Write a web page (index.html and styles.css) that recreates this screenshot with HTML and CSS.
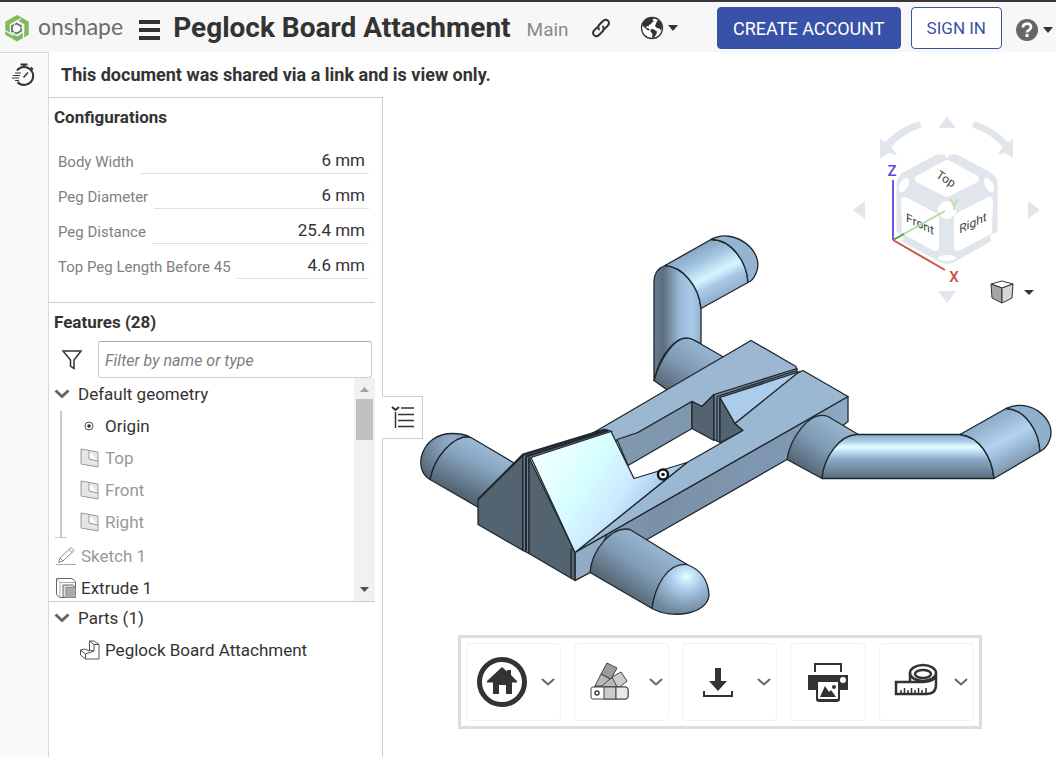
FILE: index.html
```html
<!DOCTYPE html>
<html lang="en">
<head>
    <meta charset="UTF-8">
    <meta name="viewport" content="width=device-width, initial-scale=1.0">
    <title>Peglock Board Attachment</title>
    <link rel="stylesheet" href="styles.css">
</head>
<body>
    <!-- Top bar -->
    <header class="topbar">
        <a class="logo" href="#" aria-label="Onshape home">
            <svg width="26" height="28" viewBox="0 0 26 28" fill="none">
                <path d="M13 3.500 22.500 9V19.500L13 25 3.500 19.500V9z" stroke="#7dbb5b" stroke-width="4.500"/>
                <path d="M6 11 17 4.500M19.500 12.500V24M9.500 21.500 1 16.500" stroke="#f7f7f7" stroke-width="1.300"/>
                <path d="M12.500 9.500 17 12V17L12.500 19.500 8 17V12z" stroke="#6b6b6b" stroke-width="1.800"/>
                <path d="M11 9l-1 3M18 13.500l-3 1M10 19l1-2.500" stroke="#f7f7f7"/>
            </svg>
            <span>onshape</span>
        </a>
        <button class="icon-btn menu-btn" aria-label="Menu">
            <svg width="21" height="20" viewBox="0 0 21 20" fill="#333"><path d="M0 0h21v4H0zM0 8h21v4H0zM0 16h21v4H0z"/></svg>
        </button>
        <h1>Peglock Board Attachment</h1>
        <span class="branch">Main</span>
        <button class="icon-btn link-btn" aria-label="Copy link">
            <svg width="20" height="20" viewBox="0 0 20 20" fill="none" stroke="#333" stroke-width="2" stroke-linecap="round">
                <path d="M8 11.500C6.500 9.500 7 8 8.500 6.500L12 3C14.500.500 18 2 18 5c0 1-.500 2-1.500 3L14 10.500"/>
                <path d="M12 8.500c1.500 2 1 3.500-.500 5L8 17c-2.500 2.500-6 1-6-2 0-1 .500-2 1.500-3L6 9.500"/>
            </svg>
        </button>
        <button class="icon-btn globe-btn" aria-label="Public document">
            <svg width="24" height="24" viewBox="0 0 24 24">
                <circle cx="12" cy="12" r="10.500" fill="#fff" stroke="#333" stroke-width="1.300"/>
                <path d="M3 7 6.500 3 10 1.500 14 2 12.500 4 14 5.500 12.500 6 11 8 9 9 8.500 10.500 7 10l-1 1.500 2.500 1L10 14l-2 .500L5 12 2.500 9.500z" fill="#333"/>
                <path d="M17 5l2-1 2.500 4 .500 4-1.500 2.500-1-2L17 12l-2-2 1-2.500zM10.500 13.500 13 13l4 2.500-.500 2.500-3 4-1.500-.500.500-3.500-2-2.500z" fill="#333"/>
            </svg>
            <svg class="caret" width="10" height="6" viewBox="0 0 10 6"><path d="M0 0h10L5 6z" fill="#333"/></svg>
        </button>
        <div class="account">
            <button class="create-btn">CREATE ACCOUNT</button>
            <button class="signin-btn">SIGN IN</button>
            <button class="icon-btn help-btn" aria-label="Help">
                <svg width="22" height="22" viewBox="0 0 22 22">
                    <circle cx="11" cy="11" r="11" fill="#666"/>
                    <path d="M7 8.500C7 3.500 15 3.500 15 8c0 3-4 3-4 5.500" fill="none" stroke="#fff" stroke-width="2.800"/>
                    <path d="M9.500 15h3v3h-3z" fill="#fff"/>
                </svg>
                <svg class="caret" width="10" height="6" viewBox="0 0 10 6"><path d="M0 0h10L5 6z" fill="#333"/></svg>
            </button>
        </div>
    </header>

    <div class="content">
        <!-- Left rail -->
        <nav class="rail">
            <button class="icon-btn" aria-label="Performance">
                <svg width="24" height="24" viewBox="0 0 24 24" fill="none" stroke="#333">
                    <path d="M6 7.500A9 9 0 1 1 6.500 19" stroke-width="2"/>
                    <path d="M9.500 1.500h7M13 1.500v3M19.500 4.500l2.500 2" stroke-width="2"/>
                    <path d="M12.500 14.500 17 9.500" stroke-width="1.500"/>
                    <path d="M4 10h6M2 12.500h7M1 15h7M4 17.500h4"/>
                </svg>
            </button>
        </nav>

        <main class="main">
            <p class="notice">This document was shared via a link and is view only.</p>

            <div class="workspace">
                <aside class="panel">
                    <!-- Configurations -->
                    <section class="config">
                        <h2>Configurations</h2>
                        <div class="field"><label for="bodyWidth">Body Width</label><input id="bodyWidth" value="6 mm" readonly></div>
                        <div class="field"><label for="pegDiameter">Peg Diameter</label><input id="pegDiameter" value="6 mm" readonly></div>
                        <div class="field"><label for="pegDistance">Peg Distance</label><input id="pegDistance" value="25.4 mm" readonly></div>
                        <div class="field"><label for="pegLength">Top Peg Length Before 45</label><input id="pegLength" value="4.6 mm" readonly></div>
                    </section>

                    <!-- Feature list -->
                    <section class="features">
                        <h2>Features (28)</h2>
                        <div class="filter">
                            <svg width="20" height="20" viewBox="0 0 20 20" fill="none" stroke="#333" stroke-width="1.500"><path d="M1 1h18l-7 9v8.500L8.500 16v-6z"/></svg>
                            <input type="text" placeholder="Filter by name or type" aria-label="Filter by name or type">
                        </div>
                        <div class="feature-scroll">
                            <ul class="tree">
                                <li>
                                    <div class="row"><svg class="chevron" width="16" height="10" viewBox="0 0 16 10"><path d="M1.500 1.500 8 7.500l6.500-6"/></svg>Default geometry</div>
                                    <ul class="children">
                                        <li class="row"><svg width="20" height="20" viewBox="0 0 20 20"><circle cx="9" cy="10" r="4" fill="none" stroke="#555"/><circle cx="9" cy="10" r="1.800" fill="#333"/></svg>Origin</li>
                                        <li class="row hidden-item"><svg width="20" height="20" viewBox="0 0 20 20"><path d="M1 1l17 3v15L1 16zM9 2.500V11l9 2" fill="#e6e6e6" stroke="#9a9a9a"/></svg>Top</li>
                                        <li class="row hidden-item"><svg width="20" height="20" viewBox="0 0 20 20"><path d="M1 1l17 3v15L1 16zM9 2.500V11l9 2" fill="#e6e6e6" stroke="#9a9a9a"/></svg>Front</li>
                                        <li class="row hidden-item"><svg width="20" height="20" viewBox="0 0 20 20"><path d="M1 1l17 3v15L1 16zM9 2.500V11l9 2" fill="#e6e6e6" stroke="#9a9a9a"/></svg>Right</li>
                                    </ul>
                                </li>
                                <li class="row feature hidden-item">
                                    <svg width="20" height="20" viewBox="0 0 20 20" fill="none"><path d="M2.500 16.500 4 12 15 1.500l3 3L7 15zM4 12l3 3M13 3.500l3 3" stroke="#8a8a8a"/><path d="M0 18.500h20" stroke="#9aa6d6"/></svg>Sketch 1
                                </li>
                                <li class="row feature">
                                    <svg width="20" height="20" viewBox="0 0 20 20" stroke="#666"><path d="M.500.500H16l3.500 3v16H4l-3.500-3z" fill="#fff"/><path d="M4 19.500v-15L.500.500M4 4.500h15.500" fill="none" stroke="#aaa"/><path d="M7 19.500V7h9.500l3 2v10.500z" fill="#ddd"/><path d="M10 9.500h9.500v10H10z" fill="#aaa" stroke="#888"/></svg>Extrude 1
                                </li>
                            </ul>
                            <div class="scrollbar">
                                <svg width="9" height="5" viewBox="0 0 9 5"><path d="M0 5h9L4.500 0z" fill="#a3a3a3"/></svg>
                                <div class="thumb"></div>
                                <svg class="down" width="9" height="5" viewBox="0 0 9 5"><path d="M0 0h9L4.500 5z" fill="#505050"/></svg>
                            </div>
                        </div>
                    </section>

                    <!-- Parts list -->
                    <section class="parts">
                        <div class="row"><svg class="chevron" width="16" height="10" viewBox="0 0 16 10"><path d="M1.500 1.500 8 7.500l6.500-6"/></svg>Parts (1)</div>
                        <div class="row part"><svg width="20" height="20" viewBox="0 0 20 20" fill="#fff" stroke="#555"><path d="M9.500 1H14l5 3.500V19H5.500L.500 15v-5l4-1 5 2z"/><path d="M9.500 1v9M9.500 1l4.500 3.500h5M14 4.500V11l-8.500 3v5M.500 10l5 4M9.500 10l4.500 1" fill="none"/></svg>Peglock Board Attachment</div>
                    </section>

                    <button class="panel-toggle" aria-label="Toggle feature list">
                        <svg width="24" height="24" viewBox="0 0 24 24" fill="none" stroke="#333"><path d="M1 2l3.500 3L8 2" stroke-width="2"/><path d="M4.500 7v16M10 3h13M7 9.500h16M7 15.500h16M7 21.500h16" stroke-width="1.500"/></svg>
                    </button>
                </aside>

                <!-- 3D view -->
                <div class="canvas">
                    <svg class="model" viewBox="383 98 673 659" stroke-linejoin="round" role="img" aria-label="Peglock Board Attachment model">
                        <defs>
                            <linearGradient id="pegSlope" gradientUnits="userSpaceOnUse" x1="482" y1="440" x2="456" y2="494"><stop offset="0" stop-color="#a1bedb"/><stop offset=".4" stop-color="#86a4bf"/><stop offset="1" stop-color="#52626f"/></linearGradient>
                            <linearGradient id="pegFront" gradientUnits="userSpaceOnUse" x1="660" y1="545" x2="624" y2="596"><stop offset="0" stop-color="#9bb8d4"/><stop offset=".5" stop-color="#7f9bb5"/><stop offset="1" stop-color="#53636f"/></linearGradient>
                            <linearGradient id="pegRight" gradientUnits="userSpaceOnUse" x1="842" y1="420" x2="803" y2="475"><stop offset="0" stop-color="#9bbad7"/><stop offset=".5" stop-color="#7e9ab4"/><stop offset="1" stop-color="#4e5e6c"/></linearGradient>
                            <linearGradient id="pegBase" gradientUnits="userSpaceOnUse" x1="700" y1="340" x2="664" y2="392"><stop offset="0" stop-color="#9bb8d4"/><stop offset=".5" stop-color="#7e99b2"/><stop offset="1" stop-color="#53636f"/></linearGradient>
                            <linearGradient id="pipeUp"><stop offset="0" stop-color="#657b90"/><stop offset=".2" stop-color="#5c6e7e"/><stop offset=".55" stop-color="#9bbad8"/><stop offset=".8" stop-color="#a9cbe9"/><stop offset="1" stop-color="#94b3d0"/></linearGradient>
                            <linearGradient id="pipeTop" gradientUnits="userSpaceOnUse" x1="686" y1="250" x2="713" y2="303"><stop offset="0" stop-color="#81a0bc"/><stop offset=".3" stop-color="#a3c5e3"/><stop offset=".58" stop-color="#d7f5ff"/><stop offset=".75" stop-color="#a7c9e7"/><stop offset="1" stop-color="#91aeca"/></linearGradient>
                            <linearGradient id="pipeFlat" x2="0" y2="1"><stop offset="0" stop-color="#8caac6"/><stop offset=".15" stop-color="#a8ccea"/><stop offset=".28" stop-color="#e4ffff"/><stop offset=".4" stop-color="#bddcf4"/><stop offset=".56" stop-color="#8cabc7"/><stop offset="1" stop-color="#596c7e"/></linearGradient>
                            <linearGradient id="pipeEnd" gradientUnits="userSpaceOnUse" x1="984" y1="420" x2="1010" y2="470"><stop offset="0" stop-color="#8daac5"/><stop offset=".5" stop-color="#b2d3f0"/><stop offset="1" stop-color="#7c97b0"/></linearGradient>
                            <linearGradient id="plate" gradientUnits="userSpaceOnUse" x1="540" y1="440" x2="645" y2="510"><stop offset="0" stop-color="#f4ffff"/><stop offset=".45" stop-color="#d8ffff"/><stop offset=".8" stop-color="#c9e8ff"/><stop offset="1" stop-color="#a9cbec"/></linearGradient>
                            <linearGradient id="sideFace"><stop offset="0" stop-color="#87a0b9"/><stop offset=".3" stop-color="#7b90a8"/><stop offset=".8" stop-color="#8099b3"/><stop offset="1" stop-color="#91aac5"/></linearGradient>
                            <radialGradient id="domeFront" cx=".6" cy=".25" r=".75"><stop offset="0" stop-color="#e3ffff"/><stop offset=".3" stop-color="#b2d4f0"/><stop offset=".6" stop-color="#91afca"/><stop offset="1" stop-color="#6d8598"/></radialGradient>
                            <radialGradient id="domeBack" cx=".7" cy=".2" r=".9"><stop offset="0" stop-color="#98b5d0"/><stop offset=".5" stop-color="#7892aa"/><stop offset="1" stop-color="#536674"/></radialGradient>
                        </defs>

                        <g stroke="#20272d" stroke-width="1.300">
                            <!-- back left peg -->
                            <path fill="url(#pegSlope)" d="M430 480C434 458 451 439 465 437L471 438 520 467 482 510z"/>
                            <path fill="url(#domeBack)" d="M430 480C412 470 421 434 452 434Q463 434 469 437C452 437 434 458 430 480z"/>

                            <!-- upright peg -->
                            <path fill="url(#pegBase)" d="M654 381C660 360 674 338 687 338L693 340 726 359 668 391z"/>
                            <path fill="url(#pipeUp)" d="M654 381V282Q654 270 665 266C682 267 699 286 701 309V344L693 340C678 333 660 354 654 381z"/>
                            <path fill="url(#pipeTop)" d="M665 266 711 240C732 240 747 263 748 283L701 309C699 286 682 267 665 266z"/>
                            <path fill="#94b4d1" d="M711 240C734 227 766 252 756 274Q753 281 748 283C747 263 732 240 711 240z"/>

                            <!-- back beam -->
                            <path fill="#9bb7d1" d="M592 434 751 341 796 367 797 373 713 396 702 407 692 402 638 433 617 441 600 444z"/>
                            <path fill="#7f97af" d="M617 440 638 433 692 402V429L628 466z"/>
                            <path fill="#53636f" d="M692 402 702 407 714 395V441L692 429z"/>
                            <path fill="#6f8498" d="M714 395 797 369V374L720 398V443L714 440z"/>
                            <path fill="none" d="M717 397 797 371M717 397V442"/>
                            <path fill="#53636f" d="M720 398 735 424 743 431 720 443z"/>
                            <path fill="#abcdeb" d="M720 398 800 372 735 424z"/>

                            <!-- front beam -->
                            <path fill="url(#sideFace)" d="M575 553 848 397V422L843 426 787 460 647 540 590 573 575 581z"/>
                            <path fill="#9bb8d3" d="M575 553 687 463 743 431 735 424 797 374 803 371 848 397z"/>
                            <path fill="#92acc6" d="M575 553 607 535 590 573 575 581z"/>

                            <!-- front block -->
                            <path fill="#53636f" d="M478 500 523 456V551L478 525z"/>
                            <path fill="#6a8094" d="M523 456 606 430 612 432 529 459V554L523 551z"/>
                            <path fill="none" stroke-width="2" d="M526 457 608 431M526 457V552M478 500l45-45 82-25"/>
                            <path fill="#53636f" d="M529 458 575 553V581L529 554z"/>
                            <path fill="url(#plate)" d="M531 458 611 432 634 479 687 463 575 553z"/>
                            <path fill="none" d="M571 549V579"/>

                            <!-- front peg -->
                            <path fill="url(#pegFront)" d="M590 573C592 550 612 526 630 530L687 565C667 567 655 587 652 609z"/>
                            <path fill="url(#domeFront)" d="M687 565Q708 573 709 596C707 615 672 620 652 609C655 587 667 563 687 565z"/>

                            <!-- right peg -->
                            <path fill="url(#pegRight)" d="M787 460C790 440 809 410 828 417L860 436C840 435 824 457 822 479z"/>
                            <path fill="url(#pipeFlat)" d="M822 479C824 457 840 436 856 435H960C979 437 992 457 994 479z"/>
                            <path fill="url(#pipeEnd)" d="M960 435 1006 409C1026 410 1039 432 1040 452L994 479C992 457 979 437 960 435z"/>
                            <path fill="#8fafcc" d="M1006 409C1030 397 1059 421 1049 442Q1046 449 1040 452C1039 432 1026 410 1006 409z"/>
                        </g>

                        <!-- origin marker -->
                        <circle cx="663" cy="475" r="5" fill="#fff" stroke="#14181c" stroke-width="2.500"/>
                        <circle cx="663" cy="475" r="1.800" fill="#14181c"/>
                    </svg>

                    <!-- View cube -->
                    <div class="view-cube">
                        <svg width="216" height="204" viewBox="0 0 216 204">
                            <g fill="#e0e6eb">
                                <path d="M98 23h18l-9-12zM98 186h18l-9 12zM13 105l12-9v18zM200 105l-12-9v18z"/>
                                <path d="M57 50 49 48 40 53 40 34 45 37Q58 23 79 16L82 22Q63 29 51 42z"/>
                                <path d="M157 50 165 48 173 53 173 34 168 37Q155 23 134 16L132 22Q151 29 163 42z"/>
                            </g>
                            <path d="M97 51 65 68Q58 72 58 79V125L64 136 101 156Q107 159 113 156L149 136 156 126V79Q156 72 149 68L117 51z" fill="#e0e6eb" stroke="#e0e6eb" stroke-width="3" stroke-linejoin="round"/>
                            <g fill="#fff" stroke="#fff" stroke-width="8" stroke-linejoin="round">
                                <path d="M107 59 79 74 107 88 135 74zM65 96 95 112V142L66 126zM149 96 118 112V142L148 126z"/>
                            </g>
                            <g fill="#fff">
                                <circle cx="107" cy="105" r="9"/>
                                <ellipse cx="64" cy="80" rx="4" ry="8" transform="rotate(28 64 80)"/>
                                <ellipse cx="149" cy="80" rx="4" ry="8" transform="rotate(-28 149 80)"/>
                                <ellipse cx="107" cy="153" rx="9" ry="3"/>
                                <path d="M105 46h4v6h-4zM150 130l10-4v5l-9 4zM55 127l8 3v5l-8-4z"/>
                            </g>
                            <g class="face-label">
                                <text transform="translate(106 74) rotate(32)" y="4">Top</text>
                                <text transform="translate(80 119) skewY(26)" y="4">Front</text>
                                <text transform="translate(133 118) skewY(-26)" y="4">Right</text>
                            </g>
                            <g fill="none" stroke-width="1.500">
                                <path d="M53 135V75" stroke="#6a55e0" stroke-width="2"/>
                                <path d="M53 135 105 106" stroke="#a5dba0"/>
                                <path d="M53 135 64 129" stroke="#4a9e3f"/>
                                <path d="M53 135 105 165" stroke="#cf5349" stroke-width="2"/>
                            </g>
                            <g class="axis-label">
                                <text x="52" y="71" fill="#5a48dd">Z</text>
                                <text x="114" y="105" fill="#b4e0b0">Y</text>
                                <text x="114" y="177" fill="#cb4a40">X</text>
                            </g>
                        </svg>
                        <button class="icon-btn view-btn" aria-label="View options">
                            <svg width="24" height="24" viewBox="0 0 24 24" stroke="#333" stroke-linejoin="round">
                                <path d="M1 4 12 1 23 4 12 8z" fill="#fff"/><path d="M1 4 12 8V23L2 18z" fill="#a6a6a6"/><path d="M23 4 12 8V23L22 18z" fill="#d6d6d6"/>
                            </svg>
                            <svg class="caret" width="10" height="5" viewBox="0 0 10 5"><path d="M0 0h10L5 5z" fill="#333"/></svg>
                        </button>
                    </div>

                    <!-- Bottom toolbar -->
                    <div class="toolbar">
                        <button class="tool" aria-label="Home view">
                            <svg width="50" height="50" viewBox="0 0 50 50"><circle cx="25" cy="25" r="22.500" fill="#fff" stroke="#333" stroke-width="5"/><path d="M25 10 30 14.500V13h4v5l6 6v1.500h-5V37h-6v-9h-7v9h-6V25.500h-6V24z" fill="#333"/></svg>
                            <svg class="arrow" width="14" height="8" viewBox="0 0 14 8"><path d="M1 1l6 5.500L13 1"/></svg>
                        </button>
                        <button class="tool" aria-label="Appearance">
                            <svg width="50" height="50" viewBox="0 0 50 50" stroke="#444" stroke-linejoin="round">
                                <path d="M9 30 28 20l7 10z" fill="#bbb"/><path d="M27 20l9-5 6 9-7 6h-3z" fill="#ccc"/>
                                <path d="M10 29 16 17l9 5-8 7z" fill="#b8b8b8"/><path d="M16 17l6-11 10 5-6 11z" fill="#9c9c9c"/>
                                <rect x="6" y="30" width="37" height="12" rx="2" fill="#fff"/><path d="M19 30h12v12H19z" fill="#ccc"/><path d="M31 30h10l2 2v8l-2 2H31z" fill="#e8e8e8"/>
                                <circle cx="12" cy="36" r="2" fill="none" stroke-width="1.500"/>
                            </svg>
                            <svg class="arrow" width="14" height="8" viewBox="0 0 14 8"><path d="M1 1l6 5.500L13 1"/></svg>
                        </button>
                        <button class="tool" aria-label="Export">
                            <svg width="50" height="50" viewBox="0 0 50 50" fill="#333"><path d="M22 11h6v13h6l-9 10-9-10h6zM10 34h2v4h26v-4h2v6H10z"/></svg>
                            <svg class="arrow" width="14" height="8" viewBox="0 0 14 8"><path d="M1 1l6 5.500L13 1"/></svg>
                        </button>
                        <button class="tool" aria-label="Print">
                            <svg width="50" height="50" viewBox="0 0 50 50">
                                <path d="M12 15V7h26v8" fill="none" stroke="#333" stroke-width="2"/>
                                <path d="M5 18h40v15h-8v9q0 3-3 3H16q-3 0-3-3v-9H5z" fill="#333"/>
                                <path d="M15 25h20v16q0 1-1 1H16q-1 0-1-1z" fill="#fff"/>
                                <circle cx="40" cy="23" r="3" fill="#fff"/><circle cx="31" cy="30" r="2" fill="#333"/>
                                <path d="M17 40l5-11 4 6 2-2 5 7z" fill="#333"/>
                            </svg>
                        </button>
                        <button class="tool" aria-label="Measure">
                            <svg width="50" height="50" viewBox="-2 1 50 50" fill="none" stroke="#333" stroke-width="2.500">
                                <path d="M18 26v-9M44 17v12q0 9-10 9H4V26h26q14 0 14-9" fill="#fff"/>
                                <ellipse cx="31" cy="17" rx="13" ry="8" fill="#fff"/>
                                <ellipse cx="31" cy="18" rx="8" ry="4"/>
                                <path d="M9 38v-4M12.500 38v-6M16 38v-4M19.500 38v-6M23 38v-4M26.500 38v-6M30 38v-4M34 38v-6" stroke-width="1.500"/>
                            </svg>
                            <svg class="arrow" width="14" height="8" viewBox="0 0 14 8"><path d="M1 1l6 5.500L13 1"/></svg>
                        </button>
                    </div>
                </div>
            </div>
        </main>
    </div>
</body>
</html>
```
FILE: styles.css
```css
* {
    box-sizing: border-box;
}

body {
    font-family: Roboto, "Liberation Sans", sans-serif;
    font-size: 17px;
    line-height: 20px;
    margin: 0;
    min-height: 100vh;
    display: flex;
    flex-direction: column;
    color: #333;
    background-color: white;
}

h1, h2, p, ul {
    margin: 0;
    padding: 0;
}

ul {
    list-style: none;
}

svg {
    flex-shrink: 0;
}

button, input {
    font-family: inherit;
    color: inherit;
}

button {
    cursor: pointer;
}

.icon-btn {
    display: flex;
    align-items: center;
    padding: 0;
    border: none;
    background: none;
}

/* Top bar */
.topbar {
    display: flex;
    align-items: center;
    height: 52px;
    padding: 2px 3px 0 4px;
    border-top: 2px solid #3a383d;
    background-color: #f7f7f7;
    white-space: nowrap;
}

.logo {
    display: flex;
    align-items: center;
    gap: 8px;
    font-family: Lato, sans-serif;
    font-size: 23px;
    line-height: 28px;
    color: #6b6b6b;
    text-decoration: none;
}

.logo span {
    margin-bottom: 4px;
}

.menu-btn {
    margin: 4px 13px 0 16px;
}

.topbar h1 {
    font-size: 28px;
    line-height: 32px;
}

.branch {
    margin: 4px 0 0 16px;
    font-size: 19px;
    color: #8a8a8a;
}

.link-btn {
    margin-left: 22px;
}

.globe-btn {
    margin-left: 29px;
    gap: 4px;
}

.account {
    display: flex;
    align-items: center;
    gap: 10px;
    margin-left: auto;
}

.create-btn, .signin-btn {
    height: 42px;
    padding: 0 15px;
    border: 1px solid #3852a8;
    border-radius: 4px;
    font-size: 17px;
}

.create-btn {
    background-color: #3852a8;
    font-size: 18px;
    color: white;
}

.signin-btn {
    background-color: white;
    color: #3852a8;
}

.help-btn {
    margin: 4px 0 0 4px;
    gap: 5px;
}

/* Rail and main area */
.content {
    display: flex;
    flex: 1;
}

.rail {
    width: 49px;
    padding: 10px 11px;
    border-top: 1px solid #d8d8d8;
    border-right: 1px solid #d8d8d8;
    background-color: #fafafa;
}

.main {
    display: flex;
    flex: 1;
    flex-direction: column;
    min-width: 0;
}

.notice {
    padding: 13px 12px 12px;
    font-size: 18px;
    font-weight: 700;
}

.workspace {
    display: flex;
    flex: 1;
}

/* Side panel */
.panel {
    position: relative;
    display: flex;
    flex-direction: column;
    width: 334px;
    padding-right: 7px;
    border-top: 1px solid #ccc;
    border-right: 1px solid #ccc;
}

.panel h2 {
    padding-left: 5px;
    font-size: 17px;
    line-height: 20px;
}

.config {
    padding: 9px 0 23px;
    border-bottom: 1px solid #ccc;
}

.config h2 {
    margin-bottom: 12px;
}

.field {
    display: flex;
    gap: 6px;
    height: 35px;
    padding: 0 6px 0 9px;
}

.field label {
    padding-top: 13px;
    font-size: 15px;
    color: #808080;
}

.field input {
    flex: 1;
    min-width: 0;
    padding: 8px 4px 0;
    border: none;
    border-bottom: 1px solid #e0e0e0;
    outline: none;
    background: none;
    font-size: 17px;
    text-align: right;
}

.features h2 {
    margin-top: 9px;
}

.filter {
    display: flex;
    align-items: center;
    gap: 16px;
    padding: 9px 3px 0 13px;
}

.filter input {
    flex: 1;
    min-width: 0;
    height: 37px;
    padding: 2px 6px 0;
    border: 1px solid #ccc;
    border-top-color: #aaa;
    border-radius: 3px;
    font-size: 16px;
}

.filter input::placeholder {
    color: #808080;
    font-style: italic;
}

.feature-scroll {
    display: flex;
    height: 224px;
    overflow: hidden;
    border-bottom: 1px solid #ccc;
}

.tree {
    flex: 1;
}

.row {
    display: flex;
    align-items: center;
    gap: 8px;
    height: 32px;
    padding-left: 5px;
}

.chevron {
    fill: none;
    stroke: #666;
    stroke-width: 3;
}

.children {
    position: relative;
    margin: 0 0 2px;
    padding-left: 26px;
}

/* Bracket that ties a group's children together */
.children::before {
    content: "";
    position: absolute;
    top: 1px;
    bottom: 0;
    left: 11px;
    width: 2px;
    background-color: #ccc;
}

.children::after {
    content: "";
    position: absolute;
    bottom: 0;
    left: 6px;
    width: 12px;
    height: 1px;
    background-color: #ccc;
}

.children .row, .feature {
    gap: 5px;
}

.feature {
    padding-left: 7px;
}

.hidden-item {
    color: #999;
}

.scrollbar {
    display: flex;
    flex-direction: column;
    align-items: center;
    width: 21px;
    padding: 9px 2px;
    background-color: #f1f1f1;
}

.thumb {
    width: 17px;
    height: 41px;
    margin-top: 7px;
    background-color: #c1c1c1;
}

.scrollbar .down {
    margin-top: auto;
}

.part {
    gap: 5px;
    padding-left: 31px;
}

.panel-toggle {
    position: absolute;
    top: 298px;
    right: -41px;
    z-index: 1;
    width: 41px;
    height: 43px;
    padding: 8px 7px;
    border: 1px solid #ccc;
    border-left-color: white;
    background-color: white;
}

/* 3D view */
.canvas {
    position: relative;
    display: flex;
    flex: 1;
    min-width: 0;
}

.model {
    width: 100%;
}

.view-cube {
    position: absolute;
    top: 8px;
    right: 0;
}

.face-label {
    font-size: 12px;
    fill: #444;
    text-anchor: middle;
}

.axis-label {
    font-size: 15px;
    font-weight: 500;
    text-anchor: middle;
}

.view-btn {
    position: absolute;
    right: 22px;
    bottom: 9px;
    gap: 10px;
}

/* Bottom toolbar */
.toolbar {
    position: absolute;
    bottom: 28px;
    left: 50%;
    transform: translateX(-50%);
    display: flex;
    gap: 13px;
    padding: 5px;
    border: 3px solid #dcdcdc;
    background-color: white;
}

.tool {
    display: flex;
    align-items: center;
    justify-content: center;
    gap: 14px;
    height: 78px;
    padding: 0 5px 0 10px;
    border: 1px solid #f2f2f2;
    border-radius: 4px;
    background-color: white;
}

.tool:not(:has(.arrow)) {
    padding: 0 12px;
}

.arrow {
    fill: none;
    stroke: #666;
    stroke-width: 2;
}

.tool:hover {
    background-color: #f5f5f5;
}
```
